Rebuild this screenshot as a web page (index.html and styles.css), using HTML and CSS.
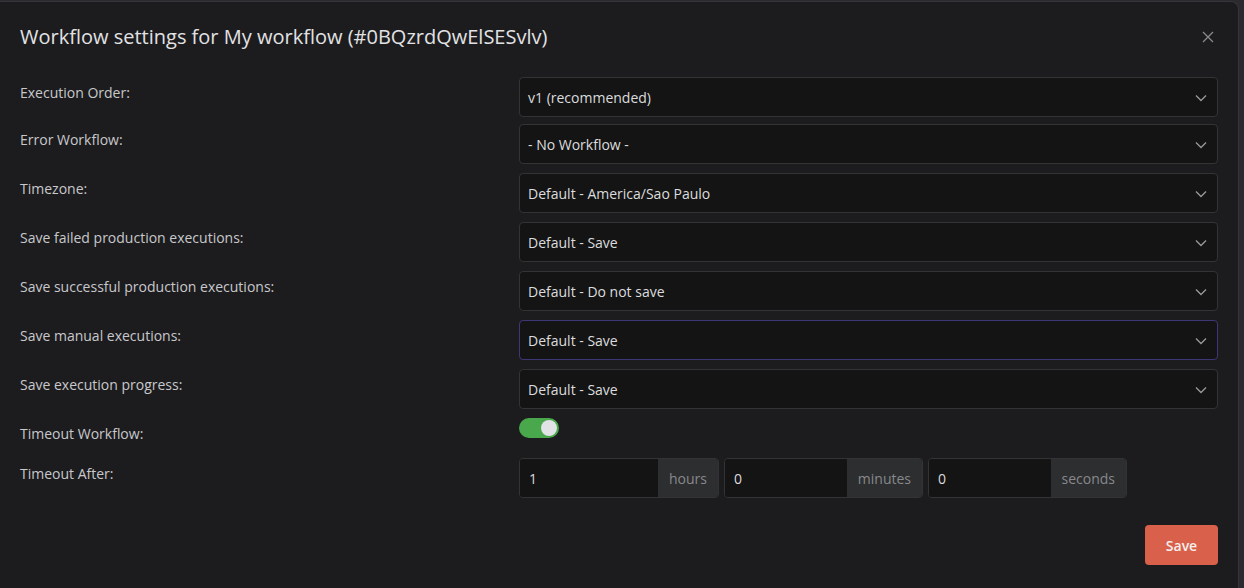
FILE: index.html
```html
<!DOCTYPE html>
<html>
<head>
<meta charset="utf-8">
<link rel="stylesheet" href="styles.css">
</head>
<body>
<div class="modal">
  <div class="header">
    <h1 class="title">Workflow settings for My workflow (#0BQzrdQwElSESvlv)</h1>
    <button class="close" aria-label="Close">
      <svg width="12" height="12" viewBox="0 0 12 12"><path d="M1 1L11 11M11 1L1 11" stroke="#8a8a8e" stroke-width="1.3" fill="none"/></svg>
    </button>
  </div>
  <div class="form">
    <div class="row first">
      <div class="label">Execution Order:</div>
      <div class="select"><span>v1 (recommended)</span><svg class="chev" width="12" height="8" viewBox="0 0 12 8"><path d="M1 1.5L6 6.5L11 1.5" stroke="#9a9a9e" stroke-width="1.3" fill="none"/></svg></div>
    </div>
    <div class="row">
      <div class="label">Error Workflow:</div>
      <div class="select"><span>- No Workflow -</span><svg class="chev" width="12" height="8" viewBox="0 0 12 8"><path d="M1 1.5L6 6.5L11 1.5" stroke="#9a9a9e" stroke-width="1.3" fill="none"/></svg></div>
    </div>
    <div class="row">
      <div class="label">Timezone:</div>
      <div class="select"><span>Default - America/Sao Paulo</span><svg class="chev" width="12" height="8" viewBox="0 0 12 8"><path d="M1 1.5L6 6.5L11 1.5" stroke="#9a9a9e" stroke-width="1.3" fill="none"/></svg></div>
    </div>
    <div class="row">
      <div class="label">Save failed production executions:</div>
      <div class="select"><span>Default - Save</span><svg class="chev" width="12" height="8" viewBox="0 0 12 8"><path d="M1 1.5L6 6.5L11 1.5" stroke="#9a9a9e" stroke-width="1.3" fill="none"/></svg></div>
    </div>
    <div class="row">
      <div class="label">Save successful production executions:</div>
      <div class="select"><span>Default - Do not save</span><svg class="chev" width="12" height="8" viewBox="0 0 12 8"><path d="M1 1.5L6 6.5L11 1.5" stroke="#9a9a9e" stroke-width="1.3" fill="none"/></svg></div>
    </div>
    <div class="row">
      <div class="label">Save manual executions:</div>
      <div class="select focused"><span>Default - Save</span><svg class="chev" width="12" height="8" viewBox="0 0 12 8"><path d="M1 1.5L6 6.5L11 1.5" stroke="#9a9a9e" stroke-width="1.3" fill="none"/></svg></div>
    </div>
    <div class="row">
      <div class="label">Save execution progress:</div>
      <div class="select"><span>Default - Save</span><svg class="chev" width="12" height="8" viewBox="0 0 12 8"><path d="M1 1.5L6 6.5L11 1.5" stroke="#9a9a9e" stroke-width="1.3" fill="none"/></svg></div>
    </div>
    <div class="row toggle-row">
      <div class="label">Timeout Workflow:</div>
      <div class="control"><div class="toggle"><div class="knob"></div></div></div>
    </div>
    <div class="row timeout-row">
      <div class="label">Timeout After:</div>
      <div class="control groups">
        <div class="group g1"><div class="inp">1</div><div class="suffix">hours</div></div>
        <div class="group"><div class="inp">0</div><div class="suffix">minutes</div></div>
        <div class="group"><div class="inp">0</div><div class="suffix">seconds</div></div>
      </div>
    </div>
  </div>
  <div class="footer">
    <button class="save">Save</button>
  </div>
</div>
</body>
</html>
```
FILE: styles.css
```css
* { box-sizing: border-box; }
html, body { margin: 0; padding: 0; }
body {
  background: #2b2b2f;
  width: 1244px;
  height: 588px;
  overflow: hidden;
  font-family: "Open Sans", "Liberation Sans", sans-serif;
}
.modal {
  width: 1239px;
  height: 600px;
  margin-top: 1px;
  background: #1c1c1e;
  border-right: 1px solid #35353a;
  border-top: 1px solid #35353a;
  border-top-right-radius: 8px;
  padding: 0 20px 0 20px;
}
.header {
  display: flex;
  align-items: center;
  justify-content: space-between;
  height: 75px;
  padding-bottom: 7px;
}
.title {
  margin: 0;
  font-size: 20px;
  font-weight: 400;
  color: #e2e2e4;
}
.close {
  background: none;
  border: 0;
  padding: 0;
  margin-right: 3px;
  margin-bottom: -2px;
  width: 14px;
  height: 14px;
  display: flex;
  align-items: center;
  justify-content: center;
}
.form {
  display: flex;
  flex-direction: column;
  gap: 9px;
}
.row {
  display: flex;
  align-items: flex-start;
}
.row.first { margin-bottom: -2px; }
.label {
  width: 499px;
  flex: none;
  padding-top: 6px;
  font-size: 14px;
  line-height: 20px;
  color: #c8c8cc;
}
.select {
  flex: 1;
  height: 40px;
  background: #141415;
  border: 1px solid #333336;
  border-radius: 4px;
  display: flex;
  align-items: center;
  justify-content: space-between;
  padding: 0 10px 0 8px;
  font-size: 14px;
  color: #dcdcde;
}
.select.focused { border-color: #3e3777; }
.chev { margin-top: 1px; }
.toggle-row { height: 25px; }
.control { flex: 1; }
.toggle {
  width: 40px;
  height: 20px;
  border-radius: 10px;
  background: #49a84b;
  position: relative;
}
.knob {
  position: absolute;
  right: 2px;
  top: 2px;
  width: 16px;
  height: 16px;
  border-radius: 50%;
  background: #e1e3e6;
}
.timeout-row { margin-top: 6px; }
.groups {
  display: flex;
  gap: 5px;
}
.group {
  width: 199px;
  height: 40px;
  display: flex;
  border: 1px solid #333336;
  border-radius: 4px;
  overflow: hidden;
}
.group.g1 { width: 200px; }
.inp {
  flex: 1;
  background: #141415;
  display: flex;
  align-items: center;
  padding-left: 9px;
  font-size: 14px;
  color: #dcdcde;
}
.suffix {
  background: #2d2e30;
  display: flex;
  align-items: center;
  padding: 0 11px;
  font-size: 14px;
  color: #88888c;
}
.footer {
  display: flex;
  justify-content: flex-end;
  margin-top: 27px;
}
.save {
  width: 73px;
  height: 40px;
  background: #d9604a;
  border: 0;
  border-radius: 4px;
  color: #f4efee;
  font-family: "Open Sans", "Liberation Sans", sans-serif;
  font-size: 14px;
  font-weight: 600;
}
```
